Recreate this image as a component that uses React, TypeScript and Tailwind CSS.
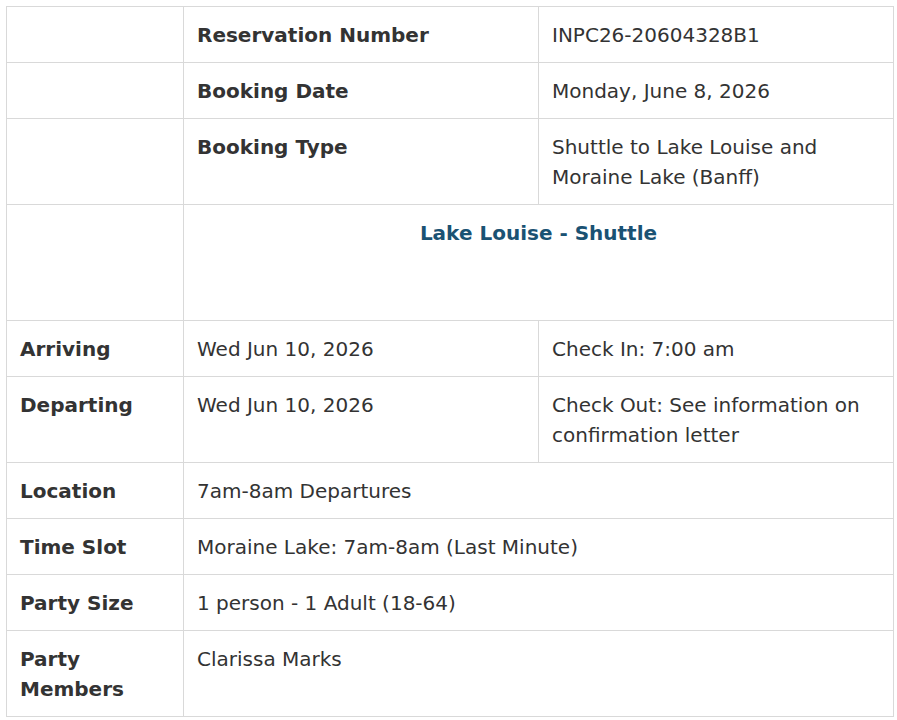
export default function App() {
  const td = "border border-[#d9d9d9] px-[13px] pt-[13px] pb-[12px] align-top";
  const th = `${td} font-bold`;
  return (
    <div
      className="p-[6px] bg-white text-[#333333] text-[20px] leading-[30px]"
      style={{ fontFamily: '"DejaVu Sans", Verdana, sans-serif' }}
    >
      <table className="w-[887px] border-collapse table-fixed">
        <colgroup>
          <col className="w-[177px]" />
          <col className="w-[355px]" />
          <col className="w-[355px]" />
        </colgroup>
        <tbody>
          <tr>
            <td className={td}></td>
            <td className={th}>Reservation Number</td>
            <td className={td}>INPC26-20604328B1</td>
          </tr>
          <tr>
            <td className={td}></td>
            <td className={th}>Booking Date</td>
            <td className={td}>Monday, June 8, 2026</td>
          </tr>
          <tr>
            <td className={td}></td>
            <td className={th}>Booking Type</td>
            <td className={td}>Shuttle to Lake Louise and Moraine Lake (Banff)</td>
          </tr>
          <tr>
            <td className={td}></td>
            <td colSpan={2} className="border border-[#d9d9d9] px-[13px] pt-[13px] pb-[72px] align-top text-center">
              <span className="font-bold text-[#1a5273]">Lake Louise - Shuttle</span>
            </td>
          </tr>
          <tr>
            <td className={th}>Arriving</td>
            <td className={td}>Wed Jun 10, 2026</td>
            <td className={td}>Check In: 7:00 am</td>
          </tr>
          <tr>
            <td className={th}>Departing</td>
            <td className={td}>Wed Jun 10, 2026</td>
            <td className={td}>Check Out: See information on confirmation letter</td>
          </tr>
          <tr>
            <td className={th}>Location</td>
            <td colSpan={2} className={td}>7am-8am Departures</td>
          </tr>
          <tr>
            <td className={th}>Time Slot</td>
            <td colSpan={2} className={td}>Moraine Lake: 7am-8am (Last Minute)</td>
          </tr>
          <tr>
            <td className={th}>Party Size</td>
            <td colSpan={2} className={td}>1 person - 1 Adult (18-64)</td>
          </tr>
          <tr>
            <td className={th}>Party Members</td>
            <td colSpan={2} className={td}>Clarissa Marks</td>
          </tr>
        </tbody>
      </table>
    </div>
  );
}
